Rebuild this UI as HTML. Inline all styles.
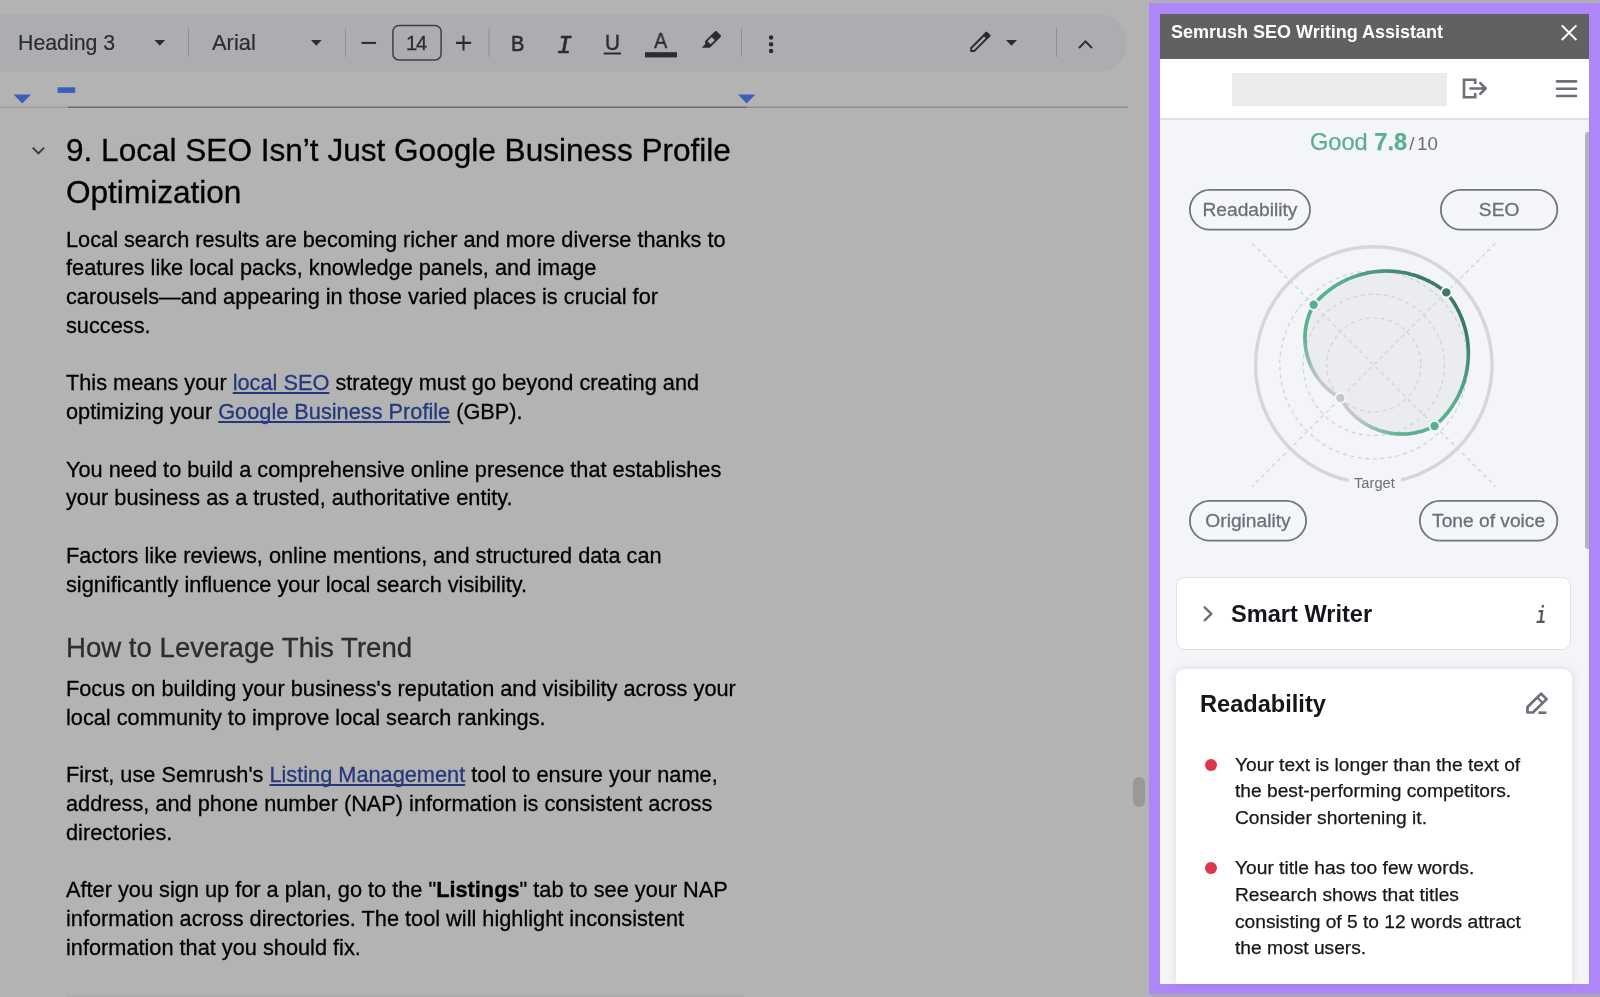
<!DOCTYPE html>
<html lang="en">
<head>
<meta charset="utf-8">
<title>Semrush SEO Writing Assistant</title>
<style>
html,body{margin:0;padding:0}
body{width:1600px;height:997px;position:relative;overflow:hidden;background:#b3b3b3;font-family:"Liberation Sans",sans-serif;color:#000}
.abs{position:absolute}
.l{position:absolute;white-space:nowrap;line-height:1;will-change:transform}
.h3{color:#000;-webkit-text-stroke:.3px currentColor}
.h4{color:#2d2d2d;-webkit-text-stroke:.3px currentColor}
.p{color:#000;-webkit-text-stroke:.3px currentColor}
.p a{color:#24397d;text-decoration:underline;text-decoration-thickness:1.5px;text-underline-offset:2px;text-decoration-skip-ink:none}
.p b{font-weight:700}
/* toolbar */
#toolbar{left:-30px;top:14px;width:1157px;height:58px;border-radius:29px;background:#abadb1}
.tb{color:#2b2c2d}
/* panel */
#frame{left:1149px;top:3px;width:451px;height:991px;background:#ad87f9}
#panel{left:1160px;top:14px;width:429px;height:970px;background:#f4f5f9;overflow:hidden}
#phead{left:0;top:0;width:429px;height:45px;background:#616161}
#prow{left:0;top:45px;width:429px;height:59px;background:#fff;border-bottom:2px solid #dedfe3}
.ptitle{color:#fff;font-weight:700}
.good{color:#5aaf8e;-webkit-text-stroke:.25px currentColor}
.of{color:#6c6e79;font-size:18.8px;margin-left:2.2px}
.of i{font-style:normal;margin-left:2.6px}
.pt{color:#15161b;-webkit-text-stroke:.25px currentColor}
.ph{color:#15161b;font-weight:700}
.pilltxt{color:#6c6e79;-webkit-text-stroke:.3px currentColor}
.card{position:absolute;background:#fff;border-radius:9px}
</style>
</head>
<body>
<!-- toolbar -->
<div id="toolbar" class="abs"></div>
<svg class="abs" style="left:0;top:0" width="1145" height="120" viewBox="0 0 1145 120">
  <g fill="#2b2c2d">
    <path d="M154.5 40h10.6l-5.3 5.8z"/>
    <path d="M311 40h10.6l-5.3 5.8z"/>
    <path d="M1006 40h11l-5.500 5.700z"/>
  </g>
  <g stroke="#8d8f93" stroke-width="1">
    <path d="M188.5 28.5v28.5M345.500 28.500v28.500M489 28.500v28.500M741.500 28.500v28.500M1056.500 28.500v28.500"/>
  </g>
  <g stroke="#2b2c2d" stroke-width="2.100" fill="none">
    <path d="M361.500 42.900h14.600"/>
    <path d="M456 42.900h15.100M463.500 35.400v15"/>
    <rect x="392.900" y="25.500" width="48.200" height="34.400" rx="6" ry="6" stroke-width="1.500" stroke="#404245"/>
    <path d="M603.700 53.500h17.300" stroke-width="2"/>
    <path d="M1079 48l6.500-6.700l6.500 6.700" stroke-width="1.900"/>
  </g>
  <rect x="645" y="52.200" width="32" height="5.200" fill="#2b2c2d"/>
  <g fill="#2b2c2d">
    <path fill-rule="evenodd" d="M715 31.200a1.200 1.200 0 0 1 1.700 0l4 4a1.200 1.200 0 0 1 0 1.700l-10.100 10.100l-.700.700h-8.200l3.600-3.700l-.400-2.700zM711.720 37.020l3.110 3.110l-4.240 4.240l-3.110-3.110z"/>
  </g>
  <g fill="#2b2c2d"><circle cx="771.100" cy="37.500" r="2.200"/><circle cx="771.100" cy="44.300" r="2.200"/><circle cx="771.100" cy="51" r="2.200"/></g>
  <g stroke="#2b2c2d" stroke-width="1.900" stroke-linejoin="round">
    <path d="M971.150 51.050v-3.050l15.250-15.250l3.040 3.040l-15.260 15.260z" fill="none"/>
    <path d="M986.400 32.750l3.040 3.040l-2.400 2.400l-3.040-3.040z" fill="#2b2c2d"/>
  </g>
  <path d="M0 107.200h68" stroke="#9d9d9d" stroke-width="1.400"/>
  <path d="M68 107.200h679" stroke="#6c6c6c" stroke-width="1.600"/>
  <path d="M747 107.200h380.500" stroke="#8c8c8c" stroke-width="1.400"/>
  <g fill="#3b5ebb">
    <path d="M13.600 94.600h17.400l-8.700 8.900z"/>
    <path d="M738 94.600h17.400l-8.700 8.900z"/>
    <rect x="57.600" y="87.300" width="17.600" height="5.600"/>
  </g>
</svg>
<svg class="abs" style="left:28px;top:140px" width="22" height="22" viewBox="0 0 22 22"><path d="M4.700 7.600l5.700 5.900l5.700-5.900" fill="none" stroke="#3a3a3a" stroke-width="1.900"/></svg>
<div class="abs" style="left:1132.500px;top:777px;width:12px;height:30px;border-radius:6px;background:#999"></div>
<div class="l tb" style="left:18.0px;top:33px;font-size:21.3px;-webkit-text-stroke:.2px #2b2c2d">Heading 3</div>
<div class="l tb" style="left:212px;top:32px;font-size:21.9px;-webkit-text-stroke:.2px #2b2c2d">Arial</div>
<div class="l tb" style="left:406.0px;top:33px;font-size:20.2px;letter-spacing:-1.2px;-webkit-text-stroke:.3px #2b2c2d">14</div>
<div class="l tb" style="left:511.0px;top:33px;font-size:22px;-webkit-text-stroke:.7px #2b2c2d;transform:scaleX(.9);transform-origin:0 0">B</div>
<div class="l tb" style="left:557.0px;top:34px;font-family:&quot;Liberation Mono&quot;,monospace;font-style:italic;font-weight:400;font-size:25px;-webkit-text-stroke:.7px #2b2c2d">I</div>
<div class="l tb" style="left:604.6px;top:32px;font-size:22.4px;-webkit-text-stroke:.45px #2b2c2d;transform:scaleX(.92);transform-origin:0 0">U</div>
<div class="l tb" style="left:653.9px;top:31px;font-size:21.5px;-webkit-text-stroke:.35px #2b2c2d;transform:scaleX(.93);transform-origin:0 0">A</div>

<!-- ruler -->
<!--RULER-->
<!-- document -->
<div class="abs" style="left:66px;top:995px;width:678px;height:2px;background:#acacae"></div>
<div class="l h3" style="left:66.3px;top:135px;font-size:31.57px;">9. Local SEO Isn’t Just Google Business Profile</div>
<div class="l h3" style="left:66.3px;top:177px;font-size:31.57px;">Optimization</div>
<div class="l p" style="left:66.3px;top:229px;font-size:21.74px;">Local search results are becoming richer and more diverse thanks to</div>
<div class="l p" style="left:66.3px;top:257px;font-size:21.74px;">features like local packs, knowledge panels, and image</div>
<div class="l p" style="left:66.3px;top:286px;font-size:21.74px;">carousels—and appearing in those varied places is crucial for</div>
<div class="l p" style="left:66.3px;top:315px;font-size:21.74px;">success.</div>
<div class="l p" style="left:66.3px;top:372px;font-size:21.74px;">This means your <a>local SEO</a> strategy must go beyond creating and</div>
<div class="l p" style="left:66.3px;top:401px;font-size:21.74px;">optimizing your <a>Google Business Profile</a> (GBP).</div>
<div class="l p" style="left:66.3px;top:459px;font-size:21.74px;">You need to build a comprehensive online presence that establishes</div>
<div class="l p" style="left:66.3px;top:487px;font-size:21.74px;">your business as a trusted, authoritative entity.</div>
<div class="l p" style="left:66.3px;top:545px;font-size:21.74px;">Factors like reviews, online mentions, and structured data can</div>
<div class="l p" style="left:66.3px;top:574px;font-size:21.74px;">significantly influence your local search visibility.</div>
<div class="l h4" style="left:66.3px;top:634px;font-size:27.6px;">How to Leverage This Trend</div>
<div class="l p" style="left:66.3px;top:678px;font-size:21.74px;">Focus on building your business's reputation and visibility across your</div>
<div class="l p" style="left:66.3px;top:707px;font-size:21.74px;">local community to improve local search rankings.</div>
<div class="l p" style="left:66.3px;top:764px;font-size:21.74px;">First, use Semrush's <a>Listing Management</a> tool to ensure your name,</div>
<div class="l p" style="left:66.3px;top:793px;font-size:21.74px;">address, and phone number (NAP) information is consistent across</div>
<div class="l p" style="left:66.3px;top:822px;font-size:21.74px;">directories.</div>
<div class="l p" style="left:66.3px;top:879px;font-size:21.74px;">After you sign up for a plan, go to the "<b>Listings</b>" tab to see your NAP</div>
<div class="l p" style="left:66.3px;top:908px;font-size:21.74px;">information across directories. The tool will highlight inconsistent</div>
<div class="l p" style="left:66.3px;top:937px;font-size:21.74px;">information that you should fix.</div>

<!-- side panel -->
<div class="abs" style="left:1152px;top:994px;width:448px;height:3px;background:#a9a5b3"></div>
<div class="abs" style="left:1149px;top:0;width:451px;height:3px;background:#b1adb8"></div>
<div id="frame" class="abs"></div>
<div id="panel" class="abs">
  <div id="phead" class="abs"></div>
  <div id="prow" class="abs"></div>
</div>
<!-- header -->
<div class="l ptitle" style="left:1171.0px;top:23px;font-size:18px;">Semrush SEO Writing Assistant</div>
<div class="abs" style="left:1232px;top:73px;width:214.5px;height:33px;background:#ebebeb"></div>
<svg class="abs" style="left:1161px;top:14px" width="428" height="110" viewBox="1161 14 428 110">
  <path d="M1561.8 25.4l14.6 14.6M1576.4 25.4l-14.6 14.6" stroke="#fff" stroke-width="2" fill="none"/>
  <g fill="none" stroke="#6c6e79" stroke-width="2.6">
    <path d="M1475.2 84v-4.2h-11.2v17.500h11.200v-4.200"/>
    <path d="M1470.500 88.500h14.500M1480.300 83.200l5.300 5.300l-5.300 5.300" stroke-linecap="round" stroke-linejoin="round"/>
    <path d="M1557 81.400h19M1557 88.700h19M1557 96h19" stroke-linecap="round"/>
  </g>
</svg>
<!-- score + radar -->
<div class="l score" style="left:1309.7px;top:131px;font-size:23.6px;"><span class="good">Good </span><b class="good">7.8</b><span class="of">/<i>10</i></span></div>
<svg class="abs" style="left:1188.0px;top:188.0px" width="123.9" height="43.6"><rect x="1.9" y="1.9" width="120.1" height="39.8" rx="19.9" fill="#f5f6fa" stroke="#73757e" stroke-width="1.8"/></svg>
<div class="l pilltxt" style="left:1189.0px;top:200px;font-size:19.2px;width:121.9px;text-align:center">Readability</div>
<svg class="abs" style="left:1439.2px;top:188.0px" width="120.2" height="43.6"><rect x="1.9" y="1.9" width="116.4" height="39.8" rx="19.9" fill="#f5f6fa" stroke="#73757e" stroke-width="1.8"/></svg>
<div class="l pilltxt" style="left:1440.2px;top:200px;font-size:19.2px;width:118.2px;text-align:center">SEO</div>
<svg class="abs" style="left:1161px;top:120px" width="428" height="450" viewBox="1161 120 428 450">
  <path d="M1313.7 304.8A95 95 0 0 1 1446.3 292.4A95 95 0 0 1 1434.5 426.0A70.3 70.3 0 0 1 1340.4 398.0A68.2 68.2 0 0 1 1313.7 304.8Z" fill="#ebecef"/>
  <g fill="none" stroke="#d5d5d9" stroke-width="1.4" stroke-dasharray="4 3.6">
    <circle cx="1373.8" cy="364.9" r="47"/><circle cx="1373.8" cy="364.9" r="70.6"/><circle cx="1373.8" cy="364.9" r="94"/>
    <path d="M1252.2 243.3L1495.4 486.5M1495.4 243.3L1252.2 486.5"/>
  </g>
  <circle cx="1373.8" cy="364.9" r="118.2" fill="none" stroke="#d6d6d8" stroke-width="3.4"/>
  <rect x="1349" y="474" width="52" height="18" fill="#f4f5f9"/>
  <g fill="none" stroke-width="3.6"><path d="M1313.46 305.09A95 95 0 0 1 1317.47 300.59" stroke="#58b18e"/><path d="M1316.95 301.14A95 95 0 0 1 1321.21 296.88" stroke="#58b18e"/><path d="M1320.65 297.40A95 95 0 0 1 1325.14 293.37" stroke="#58b18e"/><path d="M1324.56 293.86A95 95 0 0 1 1329.27 290.09" stroke="#58b18e"/><path d="M1328.66 290.55A95 95 0 0 1 1333.57 287.05" stroke="#58b18e"/><path d="M1332.94 287.47A95 95 0 0 1 1338.03 284.24" stroke="#58b18e"/><path d="M1337.38 284.63A95 95 0 0 1 1342.64 281.69" stroke="#58b18e"/><path d="M1341.97 282.04A95 95 0 0 1 1347.39 279.40" stroke="#57af8d"/><path d="M1346.70 279.71A95 95 0 0 1 1352.25 277.38" stroke="#55ac8a"/><path d="M1351.54 277.65A95 95 0 0 1 1357.22 275.62" stroke="#54a888"/><path d="M1356.50 275.86A95 95 0 0 1 1362.28 274.15" stroke="#52a485"/><path d="M1361.55 274.35A95 95 0 0 1 1367.42 272.96" stroke="#50a182"/><path d="M1366.67 273.11A95 95 0 0 1 1372.61 272.05" stroke="#4e9d80"/><path d="M1371.86 272.17A95 95 0 0 1 1377.84 271.44" stroke="#4d9a7d"/><path d="M1377.09 271.51A95 95 0 0 1 1383.10 271.12" stroke="#4b967b"/><path d="M1382.34 271.14A95 95 0 0 1 1388.37 271.08" stroke="#499378"/><path d="M1387.61 271.07A95 95 0 0 1 1393.63 271.34" stroke="#478f75"/><path d="M1392.88 271.29A95 95 0 0 1 1398.88 271.90" stroke="#468c73"/><path d="M1398.12 271.80A95 95 0 0 1 1404.08 272.74" stroke="#448870"/><path d="M1403.33 272.60A95 95 0 0 1 1409.23 273.87" stroke="#42846e"/><path d="M1408.49 273.69A95 95 0 0 1 1414.30 275.28" stroke="#40816b"/><path d="M1413.58 275.06A95 95 0 0 1 1419.29 276.97" stroke="#3f7d68"/><path d="M1418.58 276.71A95 95 0 0 1 1424.18 278.94" stroke="#3d7a66"/><path d="M1423.48 278.64A95 95 0 0 1 1428.96 281.17" stroke="#3d7a66"/><path d="M1428.28 280.83A95 95 0 0 1 1433.60 283.67" stroke="#3d7a66"/><path d="M1432.94 283.29A95 95 0 0 1 1438.09 286.42" stroke="#3d7a66"/><path d="M1437.45 286.00A95 95 0 0 1 1442.43 289.41" stroke="#3d7a66"/><path d="M1441.82 288.96A95 95 0 0 1 1446.59 292.64" stroke="#3d7a66"/><path d="M1446.06 292.11A95 95 0 0 1 1449.82 296.88" stroke="#3d7a66"/><path d="M1449.36 296.27A95 95 0 0 1 1452.85 301.25" stroke="#3d7a66"/><path d="M1452.43 300.61A95 95 0 0 1 1455.64 305.77" stroke="#3d7a66"/><path d="M1455.26 305.12A95 95 0 0 1 1458.17 310.45" stroke="#3d7a66"/><path d="M1457.82 309.78A95 95 0 0 1 1460.43 315.26" stroke="#3d7a66"/><path d="M1460.13 314.57A95 95 0 0 1 1462.42 320.19" stroke="#3d7a66"/><path d="M1462.16 319.48A95 95 0 0 1 1464.13 325.23" stroke="#3d7a66"/><path d="M1463.91 324.50A95 95 0 0 1 1465.56 330.35" stroke="#3d7a66"/><path d="M1465.38 329.61A95 95 0 0 1 1466.70 335.54" stroke="#3d7a66"/><path d="M1466.56 334.80A95 95 0 0 1 1467.55 340.79" stroke="#3f7e69"/><path d="M1467.44 340.04A95 95 0 0 1 1468.10 346.08" stroke="#41826c"/><path d="M1468.04 345.32A95 95 0 0 1 1468.35 351.39" stroke="#43866f"/><path d="M1468.33 350.63A95 95 0 0 1 1468.31 356.71" stroke="#458a72"/><path d="M1468.33 355.95A95 95 0 0 1 1467.97 362.02" stroke="#478e75"/><path d="M1468.04 361.26A95 95 0 0 1 1467.33 367.30" stroke="#499277"/><path d="M1467.44 366.54A95 95 0 0 1 1466.40 372.53" stroke="#4b967a"/><path d="M1466.55 371.79A95 95 0 0 1 1465.18 377.70" stroke="#4d9a7d"/><path d="M1465.37 376.97A95 95 0 0 1 1463.67 382.80" stroke="#4f9e80"/><path d="M1463.90 382.08A95 95 0 0 1 1461.87 387.81" stroke="#50a283"/><path d="M1462.15 387.10A95 95 0 0 1 1459.80 392.71" stroke="#52a686"/><path d="M1460.12 392.01A95 95 0 0 1 1457.46 397.48" stroke="#54aa89"/><path d="M1457.81 396.81A95 95 0 0 1 1454.86 402.12" stroke="#56ad8b"/><path d="M1455.25 401.46A95 95 0 0 1 1452.00 406.60" stroke="#58b18e"/><path d="M1452.42 405.97A95 95 0 0 1 1448.89 410.91" stroke="#58b18e"/><path d="M1449.35 410.31A95 95 0 0 1 1445.55 415.05" stroke="#58b18e"/><path d="M1446.04 414.47A95 95 0 0 1 1441.98 418.99" stroke="#58b18e"/><path d="M1442.50 418.44A95 95 0 0 1 1438.20 422.73" stroke="#58b18e"/><path d="M1438.75 422.21A95 95 0 0 1 1434.21 426.24" stroke="#58b18e"/><path d="M1434.75 425.87A70.3 70.3 0 0 1 1430.76 427.83" stroke="#58b18e"/><path d="M1431.27 427.59A70.3 70.3 0 0 1 1427.18 429.33" stroke="#58b18e"/><path d="M1427.70 429.12A70.3 70.3 0 0 1 1423.52 430.63" stroke="#58b18e"/><path d="M1424.06 430.45A70.3 70.3 0 0 1 1419.80 431.72" stroke="#58b18e"/><path d="M1420.34 431.58A70.3 70.3 0 0 1 1416.02 432.61" stroke="#58b18e"/><path d="M1416.57 432.50A70.3 70.3 0 0 1 1412.20 433.29" stroke="#58b18e"/><path d="M1412.76 433.21A70.3 70.3 0 0 1 1408.35 433.76" stroke="#58b18e"/><path d="M1408.91 433.71A70.3 70.3 0 0 1 1404.48 434.02" stroke="#58b18e"/><path d="M1405.04 433.99A70.3 70.3 0 0 1 1400.60 434.06" stroke="#59b18e"/><path d="M1401.16 434.06A70.3 70.3 0 0 1 1396.72 433.88" stroke="#61b393"/><path d="M1397.28 433.92A70.3 70.3 0 0 1 1392.86 433.50" stroke="#68b497"/><path d="M1393.42 433.57A70.3 70.3 0 0 1 1389.02 432.90" stroke="#70b69c"/><path d="M1389.58 433.00A70.3 70.3 0 0 1 1385.23 432.09" stroke="#78b7a0"/><path d="M1385.78 432.22A70.3 70.3 0 0 1 1381.48 431.07" stroke="#80b9a4"/><path d="M1382.02 431.23A70.3 70.3 0 0 1 1377.80 429.84" stroke="#87bba9"/><path d="M1378.33 430.03A70.3 70.3 0 0 1 1374.19 428.42" stroke="#8fbcad"/><path d="M1374.71 428.64A70.3 70.3 0 0 1 1370.66 426.80" stroke="#97beb1"/><path d="M1371.17 427.04A70.3 70.3 0 0 1 1367.23 424.98" stroke="#9fbfb6"/><path d="M1367.72 425.26A70.3 70.3 0 0 1 1363.91 422.98" stroke="#a7c1ba"/><path d="M1364.38 423.28A70.3 70.3 0 0 1 1360.70 420.80" stroke="#aec2be"/><path d="M1361.16 421.13A70.3 70.3 0 0 1 1357.61 418.44" stroke="#b6c4c3"/><path d="M1358.05 418.80A70.3 70.3 0 0 1 1354.66 415.92" stroke="#bec6c7"/><path d="M1355.08 416.30A70.3 70.3 0 0 1 1351.86 413.24" stroke="#c5c7cb"/><path d="M1352.26 413.64A70.3 70.3 0 0 1 1349.20 410.41" stroke="#c5c7cb"/><path d="M1349.58 410.83A70.3 70.3 0 0 1 1346.71 407.44" stroke="#c5c7cb"/><path d="M1347.06 407.87A70.3 70.3 0 0 1 1344.38 404.33" stroke="#c5c7cb"/><path d="M1344.71 404.79A70.3 70.3 0 0 1 1342.23 401.10" stroke="#c5c7cb"/><path d="M1342.53 401.57A70.3 70.3 0 0 1 1340.26 397.75" stroke="#c5c7cb"/><path d="M1340.64 398.13A68.2 68.2 0 0 1 1336.85 395.91" stroke="#c5c7cb"/><path d="M1337.31 396.20A68.2 68.2 0 0 1 1333.65 393.77" stroke="#c5c7cb"/><path d="M1334.09 394.08A68.2 68.2 0 0 1 1330.57 391.45" stroke="#c5c7cb"/><path d="M1331.00 391.79A68.2 68.2 0 0 1 1327.63 388.96" stroke="#c5c7cb"/><path d="M1328.04 389.32A68.2 68.2 0 0 1 1324.84 386.31" stroke="#c5c7cb"/><path d="M1325.23 386.69A68.2 68.2 0 0 1 1322.20 383.50" stroke="#c5c7cb"/><path d="M1322.57 383.91A68.2 68.2 0 0 1 1319.72 380.56" stroke="#c5c7cb"/><path d="M1320.07 380.98A68.2 68.2 0 0 1 1317.42 377.47" stroke="#c1c6c9"/><path d="M1317.73 377.92A68.2 68.2 0 0 1 1315.29 374.26" stroke="#b8c4c4"/><path d="M1315.58 374.72A68.2 68.2 0 0 1 1313.35 370.94" stroke="#afc3bf"/><path d="M1313.61 371.42A68.2 68.2 0 0 1 1311.59 367.51" stroke="#a7c1ba"/><path d="M1311.83 368.00A68.2 68.2 0 0 1 1310.04 363.99" stroke="#9ebfb5"/><path d="M1310.24 364.49A68.2 68.2 0 0 1 1308.68 360.38" stroke="#95bdb0"/><path d="M1308.86 360.90A68.2 68.2 0 0 1 1307.53 356.71" stroke="#8dbcac"/><path d="M1307.68 357.23A68.2 68.2 0 0 1 1306.59 352.97" stroke="#84baa7"/><path d="M1306.71 353.51A68.2 68.2 0 0 1 1305.86 349.19" stroke="#7bb8a2"/><path d="M1305.95 349.73A68.2 68.2 0 0 1 1305.35 345.38" stroke="#73b69d"/><path d="M1305.41 345.92A68.2 68.2 0 0 1 1305.05 341.54" stroke="#6ab598"/><path d="M1305.08 342.08A68.2 68.2 0 0 1 1304.97 337.69" stroke="#62b393"/><path d="M1304.97 338.23A68.2 68.2 0 0 1 1305.11 333.84" stroke="#59b18e"/><path d="M1305.07 334.38A68.2 68.2 0 0 1 1305.46 330.00" stroke="#58b18e"/><path d="M1305.40 330.55A68.2 68.2 0 0 1 1306.03 326.20" stroke="#58b18e"/><path d="M1305.94 326.73A68.2 68.2 0 0 1 1306.81 322.43" stroke="#58b18e"/><path d="M1306.69 322.96A68.2 68.2 0 0 1 1307.81 318.71" stroke="#58b18e"/><path d="M1307.66 319.23A68.2 68.2 0 0 1 1309.01 315.05" stroke="#58b18e"/><path d="M1308.83 315.56A68.2 68.2 0 0 1 1310.42 311.46" stroke="#58b18e"/><path d="M1310.21 311.97A68.2 68.2 0 0 1 1312.03 307.96" stroke="#58b18e"/><path d="M1311.79 308.45A68.2 68.2 0 0 1 1313.83 304.56" stroke="#58b18e"/></g>
  <g stroke="#f4f8f7" stroke-width="1.8">
    <circle cx="1313.7" cy="304.8" r="5.1" fill="#58b18e"/>
    <circle cx="1446.3" cy="292.4" r="5.1" fill="#3d7a66"/>
    <circle cx="1434.5" cy="426.0" r="5.1" fill="#58b18e"/>
    <circle cx="1340.4" cy="398.0" r="5.1" fill="#c5c7cb"/>
  </g>
</svg>
<div class="l" style="left:1353.5px;top:476px;font-size:14.7px;color:#6c6e79">Target</div>
<svg class="abs" style="left:1188.0px;top:498.6px" width="120.0" height="43.6"><rect x="1.9" y="1.9" width="116.2" height="39.8" rx="19.9" fill="#f5f6fa" stroke="#73757e" stroke-width="1.8"/></svg>
<div class="l pilltxt" style="left:1189.0px;top:511px;font-size:19.2px;width:118.0px;text-align:center">Originality</div>
<svg class="abs" style="left:1418.2px;top:498.6px" width="141.2" height="43.6"><rect x="1.9" y="1.9" width="137.4" height="39.8" rx="19.9" fill="#f5f6fa" stroke="#73757e" stroke-width="1.8"/></svg>
<div class="l pilltxt" style="left:1419.2px;top:511px;font-size:19.2px;width:139.2px;text-align:center">Tone of voice</div>
<div class="abs" style="left:1585.4px;top:132px;width:3.6px;height:417px;background:#b4b4b8;border-radius:3px 0 0 3px"></div>
<!-- smart writer -->
<div class="card" style="left:1176px;top:577px;width:393px;height:71px;border:1px solid #dfe0e6;border-radius:9px"></div>
<svg class="abs" style="left:1190px;top:595px" width="40" height="40" viewBox="1190 595 40 40">
  <path d="M1204.600 607.300l6.800 6.500l-6.800 6.500" fill="none" stroke="#6c6e79" stroke-width="2.300" stroke-linecap="round" stroke-linejoin="round"/>
</svg>
<div class="l ph" style="left:1231px;top:603px;font-size:23.6px;">Smart Writer</div>
<div class="l" style="left:1533.8px;top:605px;font-family:&quot;Liberation Mono&quot;,monospace;font-weight:700;font-style:italic;font-size:23.8px;color:#55575f;transform:scaleX(.68)">i</div>
<!-- readability -->
<div class="card" style="left:1176px;top:668.5px;width:395.5px;height:315.5px;box-shadow:0 0 8px rgba(25,27,35,.12);border-radius:9px 9px 3px 3px"></div>
<div class="l ph" style="left:1199.5px;top:693px;font-size:23.6px;">Readability</div>
<svg class="abs" style="left:1520px;top:685px" width="36" height="36" viewBox="1520 685 36 36">
  <g fill="none" stroke="#6c6e79" stroke-width="2.700" stroke-linejoin="round">
    <path d="M1527.500 712.500v-5.500l13.600-13.400l5.500 5.500l-13.600 13.400z"/>
    <path d="M1537.200 697.500l5.500 5.500" stroke-width="2.300"/>
    <path d="M1538.400 712.700h8" stroke-width="2.600"/>
  </g>
</svg>
<div class="abs" style="left:1205.1px;top:758.8px;width:11.8px;height:11.8px;border-radius:50%;background:#dd3648"></div>
<div class="l pt" style="left:1235px;top:755px;font-size:19.2px;">Your text is longer than the text of</div>
<div class="l pt" style="left:1235px;top:781px;font-size:19.2px;">the best-performing competitors.</div>
<div class="l pt" style="left:1235px;top:808px;font-size:19.2px;">Consider shortening it.</div>
<div class="abs" style="left:1205.1px;top:862.2px;width:11.8px;height:11.8px;border-radius:50%;background:#dd3648"></div>
<div class="l pt" style="left:1235px;top:858px;font-size:19.2px;">Your title has too few words.</div>
<div class="l pt" style="left:1235px;top:885px;font-size:19.2px;">Research shows that titles</div>
<div class="l pt" style="left:1235px;top:912px;font-size:19.2px;">consisting of 5 to 12 words attract</div>
<div class="l pt" style="left:1235px;top:938px;font-size:19.2px;">the most users.</div>


</body>
</html>
